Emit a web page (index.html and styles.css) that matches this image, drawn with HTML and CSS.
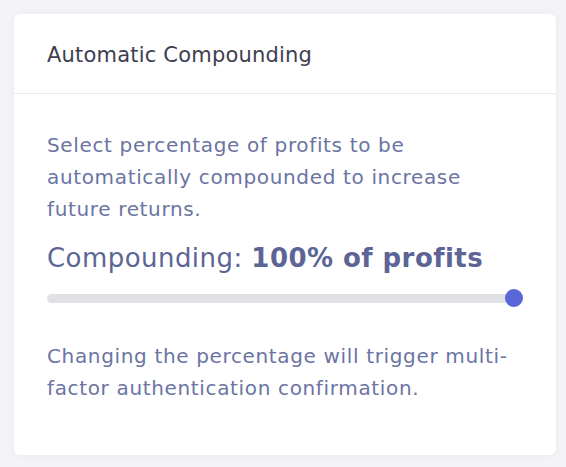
FILE: index.html
```html
<!DOCTYPE html>
<html>
<head>
<meta charset="utf-8">
<link rel="stylesheet" href="styles.css">
</head>
<body>
<div class="card">
  <div class="card-header">
    <h2 class="card-title">Automatic Compounding</h2>
  </div>
  <div class="card-body">
    <p class="desc">Select percentage of profits to be automatically compounded to increase future returns.</p>
    <div class="value">Compounding: <strong>100% of profits</strong></div>
    <div class="slider">
      <div class="track"></div>
      <div class="thumb"></div>
    </div>
    <p class="note">Changing the percentage will trigger multi-factor authentication confirmation.</p>
  </div>
</div>
</body>
</html>
```
FILE: styles.css
```css
html, body {
  margin: 0;
  padding: 0;
}
body {
  background: #f4f4f8;
  font-family: "DejaVu Sans", sans-serif;
  padding: 14px 10px 12px 14px;
}
.card {
  width: 542px;
  height: 441px;
  box-sizing: border-box;
  background: #ffffff;
  border-radius: 6px;
  box-shadow: 0 0 10px rgba(40, 40, 80, 0.06);
}
.card-header {
  padding: 29px 33px 26px;
  border-bottom: 1px solid #e9e9ef;
}
.card-title {
  margin: 0;
  font-size: 21px;
  line-height: 24px;
  font-weight: 400;
  letter-spacing: 0.2px;
  color: #3e3e50;
}
.card-body {
  padding: 35px 33px 0;
}
.desc, .note {
  margin: 0;
  font-size: 20px;
  line-height: 32px;
  letter-spacing: 0.65px;
  color: #6b74a3;
}
.value {
  margin-top: 15px;
  font-size: 26px;
  line-height: 36px;
  letter-spacing: 0.45px;
  color: #5d6596;
}
.value strong {
  font-weight: 700;
}
.slider {
  position: relative;
  margin-top: 13px;
  height: 18px;
  display: flex;
  align-items: center;
}
.track {
  flex: 1;
  margin-right: 9px;
  height: 9px;
  border-radius: 5px;
  background: #dfe1e6;
}
.thumb {
  position: absolute;
  right: 0;
  top: 0;
  width: 18px;
  height: 18px;
  border-radius: 50%;
  background: #5a67d8;
}
.note {
  margin-top: 33px;
}
```
